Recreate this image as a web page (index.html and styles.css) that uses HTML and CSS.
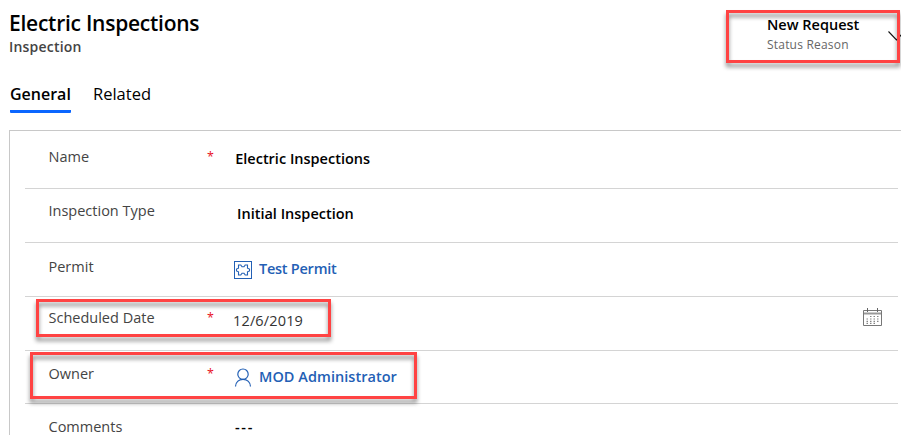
FILE: index.html
```html
<!DOCTYPE html>
<html lang="en">
<head>
<meta charset="utf-8">
<title>Electric Inspections</title>
<link rel="stylesheet" href="styles.css">
</head>
<body>
<div class="page">
  <header class="header">
    <div class="heading">
      <h1 class="title">Electric Inspections</h1>
      <div class="entity">Inspection</div>
    </div>
    <div class="status">
      <div class="status-text">
        <div class="status-value">New Request</div>
        <div class="status-label">Status Reason</div>
      </div>
      <svg class="chevron" width="16" height="12" viewBox="0 0 16 12"><path d="M.5 1.5 8.5 10 15.5 2.5" fill="none" stroke="#111" stroke-width="1.1"/></svg>
    </div>
  </header>
  <nav class="tabs">
    <span class="tab tab-active">General</span>
    <span class="tab">Related</span>
  </nav>
  <section class="panel">
    <div class="row row-name">
      <span class="label">Name</span><span class="req">*</span>
      <span class="value strong">Electric Inspections</span>
    </div>
    <div class="row row-type">
      <span class="label">Inspection Type</span><span></span>
      <span class="value strong">Initial Inspection</span>
    </div>
    <div class="row row-permit">
      <span class="label">Permit</span><span></span>
      <span class="value link"><svg class="icon" width="18" height="18" viewBox="0 0 18 18" fill="none" stroke="#2360b5"><rect x=".5" y=".5" width="17" height="17"/><path d="M4.500 4H6.800L8 5.700H10L11.200 4H13.500V7.200L15.500 8V10L13.500 10.800V14H11.200L10 12.300H8L6.800 14H4.500V10.800L2.500 10V8L4.500 7.200Z" stroke-width="1.100"/></svg><span class="link-text permit-text">Test Permit</span></span>
    </div>
    <div class="row row-date">
      <span class="label">Scheduled Date</span><span class="req">*</span>
      <span class="value date">12/6/2019</span>
      <svg class="calendar" width="19" height="18" viewBox="0 0 19 18" fill="none"><path d="M.5 2.500H18.500V17.500H.5Z" stroke="#777"/><path d="M1 5.500H18" stroke="#999" stroke-width="2"/><path d="M4.500 0V4M14.500 0V4" stroke="#666"/><path d="M7 8.500H16M3.500 11H16M3.500 13.300H16M3.500 15.300H12" stroke="#858585" stroke-width="1.200" stroke-dasharray="1.500 2"/></svg>
    </div>
    <div class="row row-owner">
      <span class="label">Owner</span><span class="req">*</span>
      <span class="value link"><svg class="icon" width="18" height="19" viewBox="0 0 18 19" fill="none" stroke="#2360b5" stroke-width="1.200"><circle cx="9" cy="6.200" r="5.200"/><path d="M1.500 18.500C1.800 14 5 11.400 9 11.400S16.200 14 16.500 18.500"/></svg><span class="link-text">MOD Administrator</span></span>
    </div>
    <div class="row row-comments">
      <span class="label">Comments</span><span></span>
      <span class="value dashes">---</span>
    </div>
  </section>
</div>
<div class="callout callout-status"></div>
<div class="callout callout-date"></div>
<div class="callout callout-owner"></div>
</body>
</html>
```
FILE: styles.css
```css
* { box-sizing: border-box; }
html, body { margin: 0; height: 100%; overflow: hidden; }
body {
  background: #fff;
  color: #000;
  font-family: "Open Sans", "Noto Sans", sans-serif;
  font-size: 14.5px;
  line-height: 20px;
}
.page { height: 435px; overflow: hidden; display: flex; flex-direction: column; }
.header { display: flex; flex: none; justify-content: space-between; height: 80px; padding: 9px 0 0 9px; }
.title { margin: 0; font-size: 21px; font-weight: 600; line-height: 28px; letter-spacing: -0.25px; }
.entity { font-size: 14px; font-weight: 600; color: #444; line-height: 20px; letter-spacing: .2px; }
.status { display: flex; width: 134px; padding-top: 6px; }
.status-text { width: 121px; flex: none; }
.status-value { font-size: 14.5px; font-weight: 600; line-height: 20px; }
.status-label { font-size: 12px; line-height: 20px; color: #666; letter-spacing: .2px; }
.chevron { flex: none; margin-top: 15px; }
.tabs { display: flex; flex: none; gap: 22px; height: 50px; padding-left: 10px; }
.tab { font-size: 16.5px; line-height: 28px; height: 33px; }
.tab-active { width: 61px; font-size: 16px; font-weight: 600; border-bottom: 3px solid #0b66ff; border-radius: 0 0 1px 1px; white-space: nowrap; }
.panel { flex: 1; min-height: 0; margin-left: 9px; padding-left: 15px; border: solid #c8c8c8; border-width: 1px 0 0 1px; }
.row {
  display: grid;
  grid-template-columns: 158.5px 26px 1fr 35px;
  align-items: start;
  width: 873px;
  height: 54px;
  padding-left: 23.5px;
  border-bottom: 1px solid #d4d4d4;
}
.label { color: #444; }
.req { color: #e81123; font-size: 12.5px; }
.value { display: flex; margin-top: 2px; }
.strong { font-weight: 600; padding-left: 2.2px; }
.row-name { height: 58px; padding-top: 16px; }
.row-type { padding-top: 12px; }
.row-type .value { margin-top: 3px; padding-left: 4px; }
.row-permit { padding-top: 14px; }
.row-date { padding-top: 11px; }
.row-date .value { margin-top: 3px; }
.row-owner { height: 53px; padding-top: 13px; }
.row-owner .value { margin-top: 3px; }
.row-comments { height: 34px; border: 0; padding-top: 13px; }
.row-comments .label { line-height: 20px; }
.link { color: #2360b5; font-weight: 600; padding-left: 1px; gap: 7px; }
.link-text { letter-spacing: .04px; }
.icon { flex: none; margin-top: 2px; }
.row-owner .icon { margin-top: 1px; }
.permit-text { letter-spacing: -.25px; }
.date { color: #333; letter-spacing: .15px; }
.dashes { letter-spacing: 1.7px; padding-left: 2px; font-weight: 600; line-height: 16px; }
.calendar { margin-top: 0; }
.callout {
  position: absolute;
  border: 3px solid #ff4343;
  filter: drop-shadow(0 4px 2px rgba(0, 0, 0, .45));
  pointer-events: none;
}
.callout-status { left: 726px; top: 10px; width: 174px; height: 53px; }
.callout-date { left: 36px; top: 299px; width: 295px; height: 38px; }
.callout-owner { left: 30px; top: 352px; width: 387px; height: 47px; }
```
